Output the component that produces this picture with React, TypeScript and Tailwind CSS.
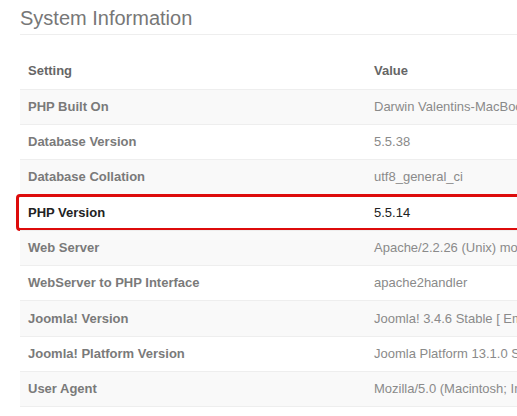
const rows: [string, string][] = [
  ["PHP Built On", "Darwin Valentins-MacBook-Pro.local 14.0.0 Darwin Kernel"],
  ["Database Version", "5.5.38"],
  ["Database Collation", "utf8_general_ci"],
  ["PHP Version", "5.5.14"],
  ["Web Server", "Apache/2.2.26 (Unix) mod_ssl/2.2.26 OpenSSL/0.9.8za"],
  ["WebServer to PHP Interface", "apache2handler"],
  ["Joomla! Version", "Joomla! 3.4.6 Stable [ Ember ] 15-December-2015"],
  ["Joomla! Platform Version", "Joomla Platform 13.1.0 Stable [ Curiosity ]"],
  ["User Agent", "Mozilla/5.0 (Macintosh; Intel Mac OS X 10_10_5)"],
];

export default function App() {
  return (
    <div
      className="h-[416px] w-[517px] overflow-hidden bg-white pl-5"
      style={{ fontFamily: '"Liberation Sans", Arial, sans-serif' }}
    >
      <div className="w-[700px]">
        <h1 className="h-[35px] border-b border-[#eeeeee] pt-[5px] text-[20px] leading-[26px] font-normal text-[#777777]">
          System Information
        </h1>

        <div className="mt-[18px] text-[13px]">
          <div className="flex h-[35.5px] items-center font-bold text-[#666666]">
            <div className="w-[346px] px-2">Setting</div>
            <div className="px-2">Value</div>
          </div>
          {rows.map(([label, value], i) => {
            const active = label === "PHP Version";
            return (
              <div
                key={label}
                className={
                  "relative flex h-[35.3px] items-center whitespace-nowrap border-t border-[#eeeeee] " +
                  (i % 2 === 0 ? "bg-[#f9f9f9]" : "bg-white")
                }
              >
                <div
                  className={
                    "w-[346px] px-2 font-bold " +
                    (active ? "text-[#222222]" : "text-[#7a7a7a]")
                  }
                >
                  {label}
                </div>
                <div className={"px-2 " + (active ? "text-[#222222]" : "text-[#8a8a8a]")}>
                  {value}
                </div>
                {active && (
                  <div className="pointer-events-none absolute -top-[1px] -bottom-[1px] -left-[4px] right-0 rounded-[4px] border-[3px] border-[#dd0b0b]" />
                )}
              </div>
            );
          })}
          <div className="border-t border-[#eeeeee]" />
        </div>
      </div>
    </div>
  );
}
